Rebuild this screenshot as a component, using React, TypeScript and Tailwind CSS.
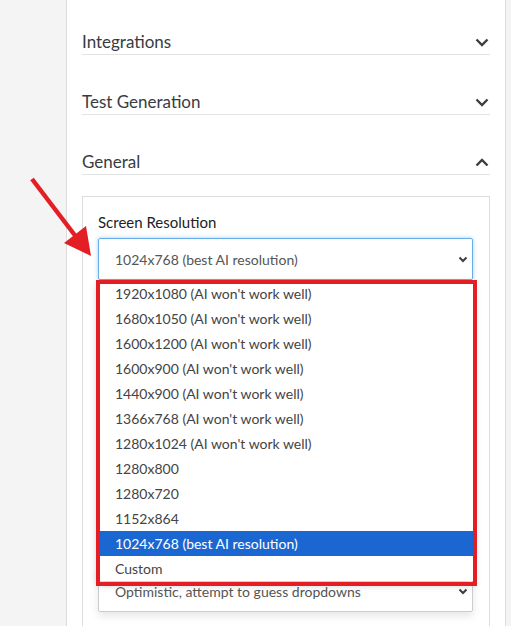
import React from 'react'

const resolutions = [
  "1920x1080 (AI won't work well)",
  "1680x1050 (AI won't work well)",
  "1600x1200 (AI won't work well)",
  "1600x900 (AI won't work well)",
  "1440x900 (AI won't work well)",
  "1366x768 (AI won't work well)",
  "1280x1024 (AI won't work well)",
  '1280x800',
  '1280x720',
  '1152x864',
  '1024x768 (best AI resolution)',
  'Custom',
]

const Chevron = ({ up = false }: { up?: boolean }) => (
  <svg width="14" height="9" viewBox="0 0 14 9" className="shrink-0">
    <path
      d={up ? 'M1.5 7.5 L7 2 L12.5 7.5' : 'M1.5 1.5 L7 7 L12.5 1.5'}
      fill="none"
      stroke="#3a3f44"
      strokeWidth="2.4"
    />
  </svg>
)

const SelectCaret = () => (
  <svg width="10" height="7" viewBox="0 0 10 7" className="shrink-0">
    <path d="M1.5 1.5 L5 5 L8.5 1.5" fill="none" stroke="#3d3d3d" strokeWidth="2" />
  </svg>
)

const SectionHeader = ({ title, open = false, first = false }: { title: string; open?: boolean; first?: boolean }) => (
  <div
    className={`flex h-[25px] items-center justify-between border-b border-[#e3e3e3] pr-[1px] ${
      first ? '' : 'mt-[35px]'
    }`}
  >
    <span className="text-[17px] leading-[24px] text-[#383c42]">{title}</span>
    <Chevron up={open} />
  </div>
)

export default function App() {
  return (
    <div
      className="relative flex h-[626px] w-[511px] overflow-hidden bg-[#f4f4f4]"
      style={{ fontFamily: 'Lato, "Open Sans", sans-serif' }}
    >
      <div className="ml-[66px] h-full w-[440px] border-x border-[#dcdcdc] bg-white px-[15px] pt-[30px]">
        <SectionHeader title="Integrations" first />
        <SectionHeader title="Test Generation" />
        <SectionHeader title="General" open />

        <div className="mt-[21px] h-[500px] border border-[#dddddd] pl-[15px] pr-[16px] pt-[15px]">
          <div className="h-[20px] text-[15px] leading-[20px] text-[#222]">Screen Resolution</div>

          <div className="relative mt-[6px]">
            <div className="flex h-[42px] items-center justify-between rounded-[2px] border border-[#66afe9] pl-[16px] pr-[4px] text-[14px] text-[#555] shadow-[0_0_4px_rgba(102,175,233,0.6)]">
              <span>1024x768 (best AI resolution)</span>
              <SelectCaret />
            </div>

            <ul className="absolute left-0 right-0 top-[43px] z-10 bg-white shadow-[0_3px_8px_rgba(0,0,0,0.25)]">
              {resolutions.map((r) => {
                const selected = r.startsWith('1024x768')
                return (
                  <li
                    key={r}
                    className={`flex h-[25px] items-center pl-[17px] text-[14px] ${
                      selected ? 'bg-[#1a67d2] text-white' : 'text-[#444]'
                    }`}
                  >
                    {r}
                  </li>
                )
              })}
            </ul>

            <div className="pointer-events-none absolute left-[-2px] top-[42px] z-20 h-[306px] w-[381px] border-4 border-[#e41e25]" />

            <div className="mt-[290px] flex h-[42px] items-center justify-between rounded-[2px] border border-[#cccccc] pl-[16px] pr-[4px] text-[14px] text-[#555] shadow-[0_4px_8px_rgba(0,0,0,0.1)]">
              <span>Optimistic, attempt to guess dropdowns</span>
              <SelectCaret />
            </div>
          </div>
        </div>
      </div>

      <svg className="pointer-events-none absolute left-0 top-0" width="120" height="280" viewBox="0 0 120 280">
        <line x1="32" y1="179" x2="80" y2="242" stroke="#e41e25" strokeWidth="4.5" />
        <polygon points="91,256 64,243 86,226" fill="#e41e25" />
      </svg>
    </div>
  )
}
